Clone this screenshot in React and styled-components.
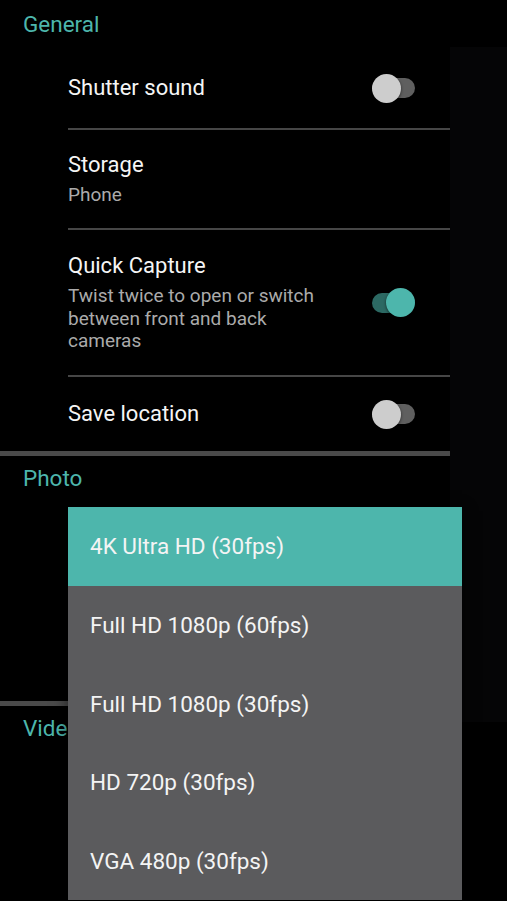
import React from 'react';
import styled, { createGlobalStyle } from 'styled-components';

const GlobalStyle = createGlobalStyle`
  html, body {
    margin: 0;
    padding: 0;
    background: #000;
  }
  body {
    font-family: Roboto, "Noto Sans", "Liberation Sans", sans-serif;
    -webkit-font-smoothing: antialiased;
  }
`;

const Screen = styled.div`
  position: relative;
  width: 507px;
  height: 901px;
  overflow: hidden;
  background: #000;
  display: grid;
  grid-template-columns: 450px 1fr;
  align-items: start;
`;

const SettingsColumn = styled.div`
  display: flex;
  flex-direction: column;
`;

const SidePanel = styled.div`
  margin-top: 47px;
  height: 675px;
  background: #050506;
`;

const Section = styled.section`
  display: flex;
  flex-direction: column;
  border-bottom: ${(p) => (p.$last ? 'none' : '5px solid #4a4a4a')};
`;

const SectionHeader = styled.h2`
  margin: 0;
  height: ${(p) => p.$height || 48}px;
  display: flex;
  align-items: center;
  padding-left: 23px;
  font-size: 22.5px;
  font-weight: 400;
  color: #4db6ac;
`;

const Row = styled.div`
  display: flex;
  align-items: center;
  justify-content: space-between;
  min-height: ${(p) => p.$height}px;
  margin-left: 68px;
  padding-right: 35px;
  box-sizing: border-box;
  border-bottom: ${(p) => (p.$divider ? '2px solid #464646' : 'none')};
`;

const RowText = styled.div`
  display: flex;
  flex-direction: column;
  max-width: 275px;
`;

const Title = styled.div`
  font-size: 22px;
  line-height: 28px;
  color: #f5f5f5;
`;

const Summary = styled.div`
  margin-top: 5px;
  font-size: 19px;
  line-height: 22.5px;
  color: #ababab;
`;

const SwitchTrack = styled.div`
  position: relative;
  width: 43px;
  height: 20px;
  border-radius: 10px;
  background: ${(p) => (p.$on ? '#2c6963' : '#5f5f5f')};
`;

const SwitchThumb = styled.span`
  position: absolute;
  top: -4.5px;
  left: ${(p) => (p.$on ? 14 : 0)}px;
  width: 29px;
  height: 29px;
  border-radius: 50%;
  background: ${(p) => (p.$on ? '#4db6ac' : '#cdcdcd')};
  box-shadow: 0 1px 3px rgba(0, 0, 0, 0.6);
`;

const Menu = styled.ul`
  position: absolute;
  left: 68px;
  top: 507px;
  width: 394px;
  margin: 0;
  padding: 0;
  list-style: none;
  background: #5b5b5d;
  box-shadow: 0 4px 14px rgba(0, 0, 0, 0.6);
`;

const MenuItem = styled.li`
  height: 78.7px;
  display: flex;
  align-items: center;
  padding-left: 22px;
  font-size: 22.5px;
  color: #f4f4f4;
  background: ${(p) => (p.$selected ? '#4db6ac' : 'transparent')};
`;

function Switch({ on }) {
  return (
    <SwitchTrack $on={on}>
      <SwitchThumb $on={on} />
    </SwitchTrack>
  );
}

const resolutions = [
  '4K Ultra HD (30fps)',
  'Full HD 1080p (60fps)',
  'Full HD 1080p (30fps)',
  'HD 720p (30fps)',
  'VGA 480p (30fps)',
];

export default function App() {
  return (
    <>
      <GlobalStyle />
      <Screen>
        <SettingsColumn>
          <Section>
            <SectionHeader>General</SectionHeader>
            <Row $height={82} $divider>
              <RowText>
                <Title>Shutter sound</Title>
              </RowText>
              <Switch on={false} />
            </Row>
            <Row $height={100} $divider>
              <RowText>
                <Title>Storage</Title>
                <Summary>Phone</Summary>
              </RowText>
            </Row>
            <Row $height={147} $divider>
              <RowText>
                <Title>Quick Capture</Title>
                <Summary>Twist twice to open or switch between front and back cameras</Summary>
              </RowText>
              <Switch on />
            </Row>
            <Row $height={74}>
              <RowText>
                <Title>Save location</Title>
              </RowText>
              <Switch on={false} />
            </Row>
          </Section>
          <Section>
            <SectionHeader $height={44}>Photo</SectionHeader>
            {/* rows hidden behind the open resolution menu */}
            <Row $height={100} $divider />
            <Row $height={101} />
          </Section>
          <Section $last>
            <SectionHeader $height={44}>Video</SectionHeader>
          </Section>
        </SettingsColumn>
        <SidePanel />
        <Menu>
          {resolutions.map((r, i) => (
            <MenuItem key={r} $selected={i === 0}>
              {r}
            </MenuItem>
          ))}
        </Menu>
      </Screen>
    </>
  );
}
